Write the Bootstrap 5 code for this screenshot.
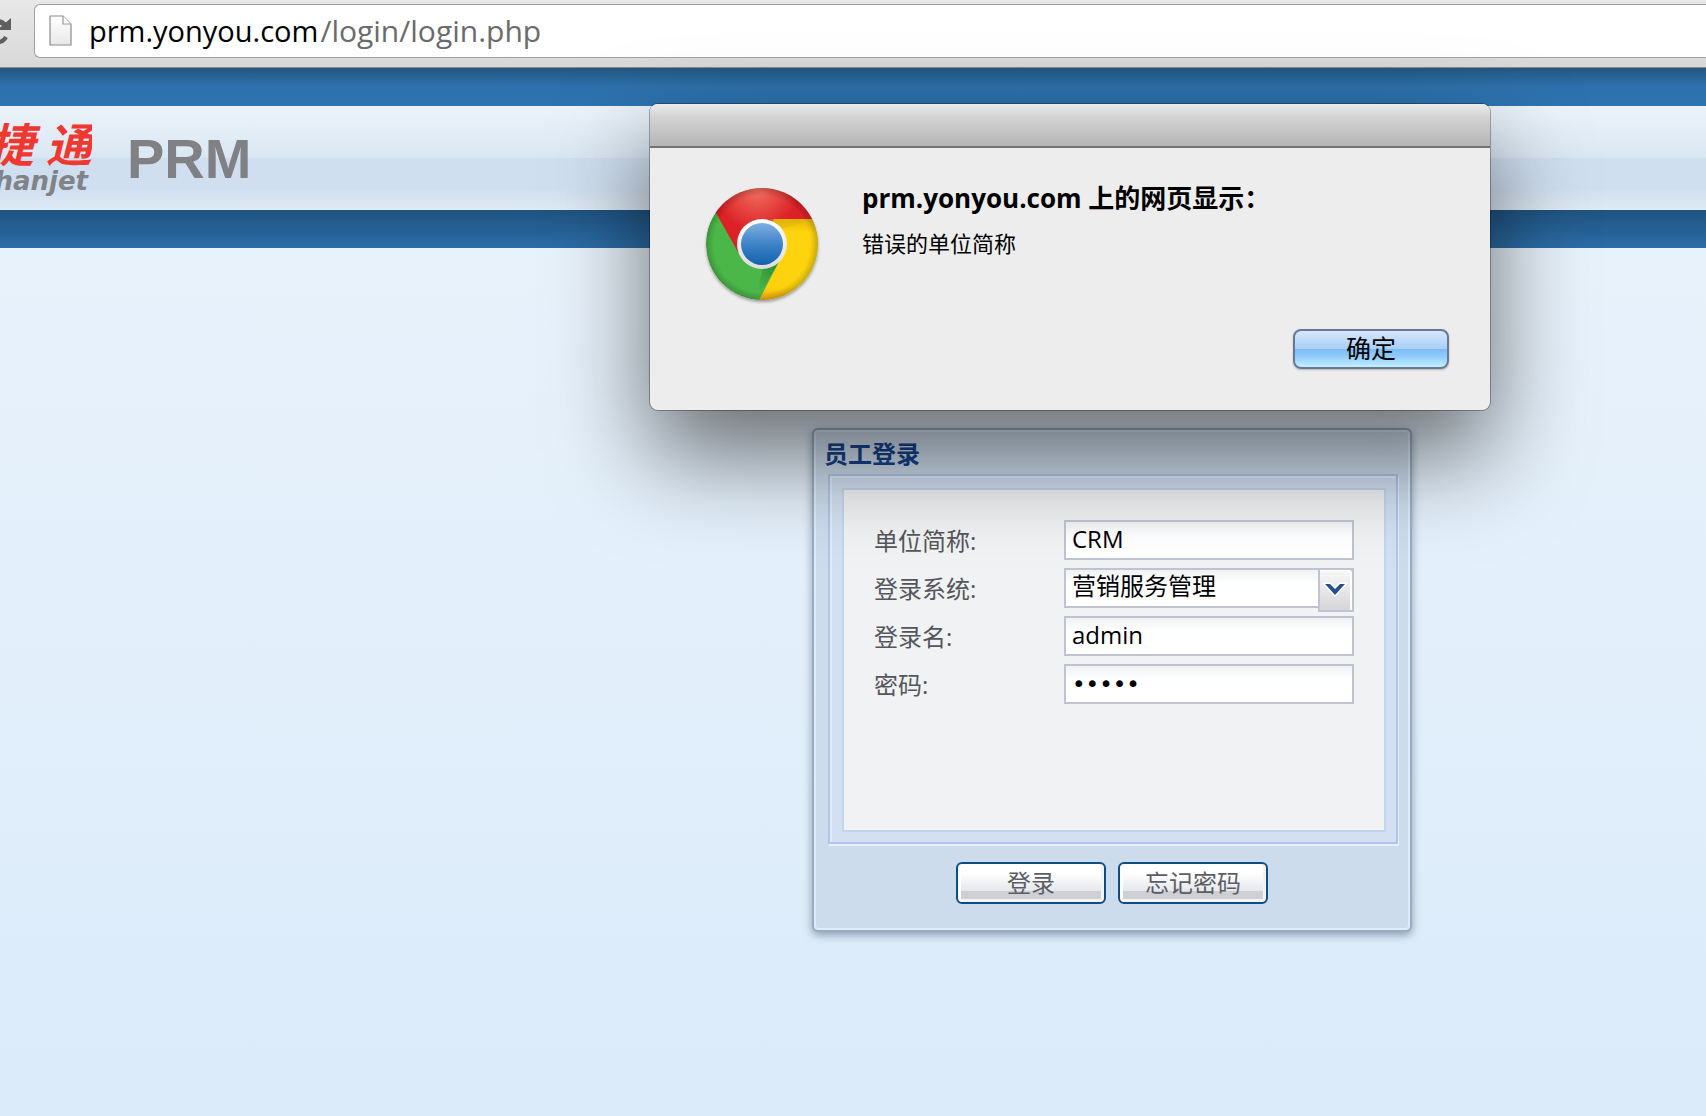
<!DOCTYPE html>
<html lang="zh-CN">
<head>
<meta charset="utf-8">
<meta name="viewport" content="width=device-width, initial-scale=1">
<title>PRM 员工登录</title>
<link href="https://cdn.jsdelivr.net/npm/bootstrap@5.3.0/dist/css/bootstrap.min.css" rel="stylesheet">
<style>
body{min-height:100vh;font-family:"Open Sans","Noto Sans CJK SC",sans-serif;font-size:24px;line-height:32px;color:#000;background:linear-gradient(#e8f2fb 248px,#dbebfa 1116px) no-repeat #dbebfa;overflow-x:hidden}
.toolbar{height:68px;padding:4px 0 9px;background:linear-gradient(#e8e8e8,#d8d8d8);border-bottom:1px solid #8b8b8b}
.reload{width:34px}
.address{height:54px;border:1px solid #a0a1a2;border-right:0;border-radius:6px 0 0 6px;background:#fff;padding-left:14px}
.url{font-size:30px;line-height:38px;color:#6b6b6b;text-decoration:none}
.url b{font-size:29px;font-weight:400;color:#000;margin-right:2px}
.band-top{height:38px;background:linear-gradient(#23577f,#2d72ae 50%,#2d73b0)}
.band-low{height:38px;background:linear-gradient(#1f5380,#2c6da8)}
.brandbar{height:104px;background:linear-gradient(#ecf3fa 0,#dae7f3 50%,#cfdff0 50%,#d0dfef 80%,#e0eaf4 100%)}
.logo{width:92px;height:84px;overflow:hidden}
.logo-cn{color:#ee3830;font-size:46px;line-height:46px;font-weight:700;font-style:italic;gap:12px}
.logo-en{color:#808489;font-family:"DejaVu Sans",sans-serif;font-size:26px;line-height:28px;font-weight:700;font-style:italic;padding-right:4px}
.prm{font-family:"Liberation Sans",Arial,sans-serif;font-size:56px;line-height:64px;font-weight:700;color:#808184;margin-left:35px;padding-top:2px}
.stage{padding-top:180px;padding-left:812px}
.login{width:600px;border:2px solid #98aec8;border-radius:6px;background:#cddcec;box-shadow:inset 0 0 0 2px #e2ebf5,0 3px 8px rgba(70,90,120,.55);padding:6px 12px 26px 14px}
.login h1{font-size:24px;line-height:36px;font-weight:700;color:#15428b;margin:0 0 2px -4px}
.frame{border:2px solid #b0c5e9;box-shadow:inset 2px 2px 0 #e2ecf8,1px 2px 0 #e8f0f8;background:#d2e0f1;padding:12px 10px 10px 12px;margin-bottom:18px}
.fields{border:2px solid #c3d7ea;background:#f1f2f4;padding:30px 30px 0 30px;height:344px}
.fields .line{margin-bottom:8px}
.fields label{color:#55565c;padding-top:2px}
.field{width:290px;height:40px;border:2px solid #c0c3d2;border-radius:0;background:linear-gradient(#eff2f4,#fff 14px);padding:0 6px 4px;font-size:24px;line-height:32px;color:#000;outline:0;appearance:none}
.field.pass{font-family:"DejaVu Sans",sans-serif;font-size:23px;padding-bottom:0}
.pick{height:40px}
.pick select{padding-right:40px}
.trigger{position:absolute;right:0;top:0;width:36px;height:44px;border:2px solid #c0c3d2;border-radius:0 5px 0 0;background:linear-gradient(#f8f8f8,#d6d6d8);box-shadow:inset -2px 1px 0 #fff;pointer-events:none}
.actions{padding-right:2px}
.act{width:150px;height:42px;border:2px solid #0d4f83;border-radius:6px;background:linear-gradient(#fff 25%,#e6e7ec 70%,#cfd0d5 71%,#cfd0d5);box-shadow:inset 3px 0 0 #fff,inset -3px 0 0 #f4f4f4,inset 0 -3px 0 #f4f4f4;color:#5b5e64;padding:0;font-size:24px;line-height:32px}
.alertbox{position:absolute;left:650px;top:104px;width:840px;border-radius:8px;background:#ededed;box-shadow:0 0 0 1px rgba(0,0,0,.3),0 44px 96px rgba(0,0,0,.56)}
.alertbar{height:44px;border-radius:8px 8px 0 0;border-bottom:2px solid #727272;background:linear-gradient(#ebebeb,#d4d4d4 30%,#b5b5b5)}
.alertbody{padding:36px 41px 41px 52px}
.alertbody h2{font-size:26px;line-height:32px;font-weight:700;margin:-2px 0 14px}
.alertbody p{font-size:22px;line-height:30px;margin:0}
.says{padding-left:36px}
.okrow{padding-top:21px}
.ok{width:156px;height:40px;border:2px solid #687894;border-radius:8px;background:linear-gradient(#d6e7fa,#a9cff7 49%,#7ebbf7 51%,#8fcbfb 70%,#c4efff);box-shadow:0 1px 2px rgba(0,0,0,.25);font-size:25px;line-height:32px;padding:0 0 2px;color:#000}
</style>
</head>
<body>
<div class="toolbar d-flex">
<div class="reload flex-shrink-0">
<svg width="34" height="54" viewBox="0 4 34 54" aria-hidden="true"><path d="M-10 26Q-2 18 5 25" fill="none" stroke="#5e5e5e" stroke-width="5"/><path d="M11 18v12H-3L3 25z" fill="#5e5e5e"/><path d="M-5 42Q3 43 6 37" fill="none" stroke="#5e5e5e" stroke-width="4"/></svg>
</div>
<div class="address flex-grow-1 d-flex align-items-center">
<svg class="me-3" width="24" height="32" viewBox="0 0 24 32" aria-hidden="true"><defs><linearGradient id="pg" x2="0" y2="1"><stop stop-color="#fff"/><stop offset="1" stop-color="#e8e8e8"/></linearGradient></defs><path d="M1 1h13l8 8v21H1z" fill="url(#pg)" stroke="#8c8c8c" stroke-width="1.2"/><path d="M14 1v8h8" fill="#fff" stroke="#999" stroke-width="1.2"/></svg>
<a class="url" href="#"><b>prm.yonyou.com</b>/login/login.php</a>
</div>
</div>
<header>
<div class="band-top"></div>
<div class="brandbar d-flex align-items-center">
<div class="logo d-flex flex-column align-items-end justify-content-center">
<div class="logo-cn d-flex"><span>捷</span><span>通</span></div>
<div class="logo-en">hanjet</div>
</div>
<div class="prm">PRM</div>
</div>
<div class="band-low"></div>
</header>
<main class="stage">
<form class="login">
<h1>员工登录</h1>
<div class="frame">
<div class="fields">
<div class="line d-flex justify-content-between align-items-center"><label for="unit">单位简称:</label><input class="field" id="unit" type="text" value="CRM"></div>
<div class="line d-flex justify-content-between align-items-center"><label for="sys">登录系统:</label><div class="pick position-relative d-flex"><select class="field" id="sys"><option>营销服务管理</option></select><span class="trigger"><svg class="d-block" width="32" height="40" viewBox="0 0 32 40" aria-hidden="true"><path d="M5 14h5l5 5 5-5h5L15 25z" fill="#264f91" stroke="#fff" stroke-width="3" paint-order="stroke"/></svg></span></div></div>
<div class="line d-flex justify-content-between align-items-center"><label for="user">登录名:</label><input class="field" id="user" type="text" value="admin"></div>
<div class="line d-flex justify-content-between align-items-center"><label for="pw">密码:</label><input class="field pass" id="pw" type="password" value="admin"></div>
</div>
</div>
<div class="d-flex justify-content-center gap-2 actions">
<button class="act me-1" type="button">登录</button>
<button class="act" type="button">忘记密码</button>
</div>
</form>
</main>
<div class="alertbox" role="alertdialog" aria-labelledby="at">
<div class="alertbar"></div>
<div class="alertbody">
<div class="d-flex">
<svg class="flex-shrink-0" width="124" height="124" viewBox="-60 -60 124 124" aria-hidden="true">
<defs>
<radialGradient id="r" gradientUnits="userSpaceOnUse" cx="-5" cy="-55" r="60"><stop stop-color="#f2705f"/><stop offset=".7" stop-color="#dc2127"/></radialGradient>
<linearGradient id="b" x2="0" y2="1"><stop stop-color="#7fb0e2"/><stop offset=".5" stop-color="#3f83c8"/><stop offset="1" stop-color="#1062ab"/></linearGradient>
<linearGradient id="w" x2="0" y2="1"><stop stop-color="#fff"/><stop offset="1" stop-color="#ddd"/></linearGradient>
<radialGradient id="e" gradientUnits="userSpaceOnUse" cx="0" cy="0" r="56"><stop offset=".86" stop-opacity="0"/><stop offset="1" stop-opacity=".2"/></radialGradient>
<linearGradient id="y" x2="0" y2="1"><stop stop-color="#e5b50d"/><stop offset=".15" stop-color="#fdd409"/><stop offset=".8" stop-color="#fcd20a"/><stop offset="1" stop-color="#f3a21c"/></linearGradient>
<linearGradient id="g" gradientUnits="userSpaceOnUse" x1="12" y1="22" x2="-8" y2="42"><stop stop-color="#2f8f3c"/><stop offset="1" stop-color="#4cb748"/></linearGradient>
<clipPath id="c"><circle r="56"/></clipPath>
<filter id="s" x="-20%" y="-20%" width="140%" height="140%"><feDropShadow dx="0" dy="2" stdDeviation="1.5" flood-opacity=".35"/></filter>
</defs>
<g filter="url(#s)"><g clip-path="url(#c)">
<circle r="56" fill="#4cb748"/>
<path d="M18 16L1 24L-8 60z" fill="url(#g)"/>
<path d="M0-25H60V60H-5L18 16z" fill="url(#y)"/>
<path d="M-46-31L-24 8L0 0L12-25H60V-60H-60z" fill="url(#r)"/>
<path d="M8-25H50L19-15z" fill="#dcae10" opacity=".4"/>
<circle r="56" fill="url(#e)"/></g></g>
<circle r="25" fill="url(#w)"/><circle r="21" fill="url(#b)"/>
</svg>
<div class="says"><h2 id="at">prm.yonyou.com 上的网页显示：</h2><p>错误的单位简称</p></div>
</div>
<div class="okrow d-flex justify-content-end"><button class="ok" type="button">确定</button></div>
</div>
</div>
<script src="https://cdn.jsdelivr.net/npm/bootstrap@5.3.0/dist/js/bootstrap.bundle.min.js"></script>
</body>
</html>
